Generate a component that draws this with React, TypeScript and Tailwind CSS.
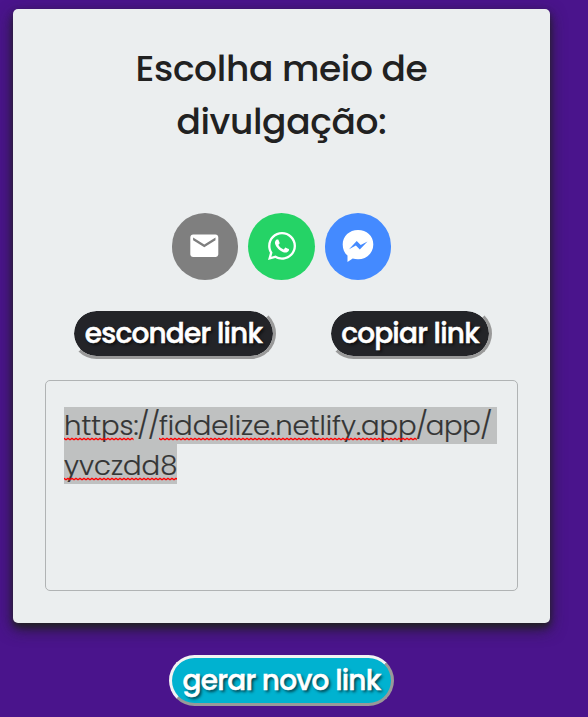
import type { ReactNode } from "react";
import { MdEmail } from "react-icons/md";
import { FaWhatsapp } from "react-icons/fa";

function Misspelled({ id, children }: { id: string; children: ReactNode }) {
  return (
    <span className="relative">
      {children}
      <svg className="absolute left-0 top-[30px] h-[4px] w-full" aria-hidden="true">
        <defs>
          <pattern id={id} width="4" height="4" patternUnits="userSpaceOnUse">
            <path d="M-1 0.500 0 1.300 2 2.700 4 1.300 5 0.600" fill="none" stroke="#ff0000" strokeWidth="1.400" />
          </pattern>
        </defs>
        <rect width="100%" height="4" fill={`url(#${id})`} />
      </svg>
    </span>
  );
}

function Circle({ color, children }: { color: string; children: ReactNode }) {
  return (
    <button className={`flex size-[66.5px] items-center justify-center rounded-full text-white ${color}`}>
      {children}
    </button>
  );
}

function PillButton({ className, children }: { className: string; children: ReactNode }) {
  return (
    <button
      className={`flex h-[51px] items-center justify-center whitespace-nowrap rounded-full border-[3px] pt-px text-[28px] font-medium text-white [-webkit-text-stroke:0.5px_white] [text-shadow:2px_2px_3px_rgba(0,0,0,0.65)] ${className}`}
    >
      {children}
    </button>
  );
}

export default function App() {
  return (
    <main className="h-[717px] w-[588px] overflow-hidden bg-[#4a148c] pl-[13px] pt-[9px] font-['Poppins','Inter',sans-serif]">
      <section className="flex h-[614px] w-[537px] flex-col items-center rounded-[5px] bg-[#ebeeef] pt-[33px] shadow-[0_6px_16px_rgba(33,33,33,0.8),0_4px_6px_rgba(33,33,33,0.8)]">
        <h1 className="text-center text-[36px] font-medium leading-[53px] tracking-[-0.36px] text-[#212121]">
          <span className="block">Escolha meio de</span>
          <span className="block">divulgação:</span>
        </h1>
        <div className="mt-[65px] flex gap-[10px]">
          <Circle color="bg-[#7f7f7f]">
            <MdEmail size={33.6} className="-translate-x-[0.5px]" />
          </Circle>
          <Circle color="bg-[#25d366]">
            <FaWhatsapp size={32} />
          </Circle>
          <Circle color="bg-[#448aff]">
            <svg width="32" height="34" viewBox="0 0 32 34" className="translate-y-px">
              <path
                fill="currentColor"
                fillRule="evenodd"
                d="M16 0C7.400 0 .7 6.200.7 14.400c0 4.500 1.600 8.500 4.800 11.200V32l5.200-3.500c1.600.5 3.400.8 5.300.8 8.600 0 15.300-6.300 15.300-14.900S24.600 0 16 0ZM7 19.300l7.700-8.200 4 4 6.800-3.700-7.700 8.200-3.900-4Z"
              />
            </svg>
          </Circle>
        </div>
        <div className="mt-[28.500px] flex w-full pl-[58px]">
          <PillButton className="w-[205px] border-b-[#999] border-l-[#ebeeef] border-r-[#999] border-t-[#ebeeef] bg-[#232428] bg-clip-padding tracking-[-0.8px]">
            esconder link
          </PillButton>
          <PillButton className="ml-[52px] w-[164px] border-b-[#999] border-l-[#ebeeef] border-r-[#999] border-t-[#ebeeef] bg-[#232428] bg-clip-padding tracking-[-0.8px]">
            copiar link
          </PillButton>
        </div>
        <div className="mt-[21px] h-[211px] w-[473px] rounded-[5px] border border-[#b0b3b4] pl-[18px] pt-[26px] text-[27.5px] font-light text-[#343535] [-webkit-text-stroke:0.2px_#343535]">
          <div className="flex h-[37px] w-[433px] items-center whitespace-nowrap bg-[#bfc1c1] leading-[37px]">
            <Misspelled id="wave-protocol">https</Misspelled>
            <span className="tracking-[-1.35px]">://</span>
            <Misspelled id="wave-host">fiddelize.netlify.app</Misspelled>
            <span className="-ml-px tracking-[-2px]">/</span>
            <span className="tracking-[-0.4px]">app/</span>
          </div>
          <div className="flex h-[40px] w-[113px] items-end bg-[#bfc1c1] leading-[37px]">
            <Misspelled id="wave-code">yvczdd8</Misspelled>
          </div>
        </div>
      </section>
      <div className="mt-[32px] flex w-[537px] justify-center">
        <PillButton className="w-[225px] border-b-[#999] border-l-[#f3f3f3] border-r-[#999] border-t-[#f3f3f3] bg-[#00b2d0] tracking-[-0.8px]">
          gerar novo link
        </PillButton>
      </div>
    </main>
  );
}
